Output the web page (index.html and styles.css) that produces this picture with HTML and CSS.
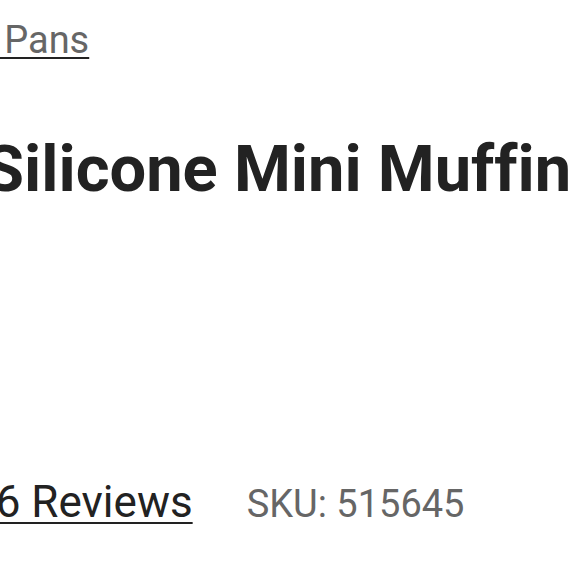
FILE: index.html
```html
<!DOCTYPE html>
<html>
<head>
<meta charset="utf-8">
<link rel="stylesheet" href="styles.css">
</head>
<body>
<div class="page">
  <nav class="crumbs"><a class="crumb" href="#">Muffin Pans</a></nav>
  <h1 class="title">Silicone Mini Muffin Pan</h1>
  <div class="meta">
    <a class="reviews" href="#">16 Reviews</a>
    <span class="sku">SKU: 515645</span>
  </div>
</div>
</body>
</html>
```
FILE: styles.css
```css
html, body {
  margin: 0;
  padding: 0;
  background: #fff;
  overflow: hidden;
}
.page {
  width: 580px;
  height: 580px;
  overflow: hidden;
  font-family: Roboto, "Noto Sans", sans-serif;
  font-variant-ligatures: none;
  white-space: nowrap;
}
.crumbs {
  margin-left: -116px;
  padding-top: 20px;
  font-size: 38px;
  line-height: 40px;
}
.crumb {
  color: #666;
  text-decoration: underline;
  text-decoration-color: #222;
  text-decoration-thickness: 2px;
  text-underline-offset: 4px;
}
.title {
  margin: 0;
  margin-left: -16px;
  padding-top: 69px;
  font-size: 65px;
  line-height: 80px;
  font-weight: 700;
  color: #222;
}
.meta {
  margin-left: -29px;
  padding-top: 267px;
  display: flex;
  align-items: baseline;
  gap: 54px;
}
.reviews {
  font-size: 44px;
  color: #222;
  text-decoration: underline;
  text-decoration-thickness: 2px;
  text-underline-offset: 5px;
}
.sku {
  font-size: 38px;
  color: #666;
}
```
